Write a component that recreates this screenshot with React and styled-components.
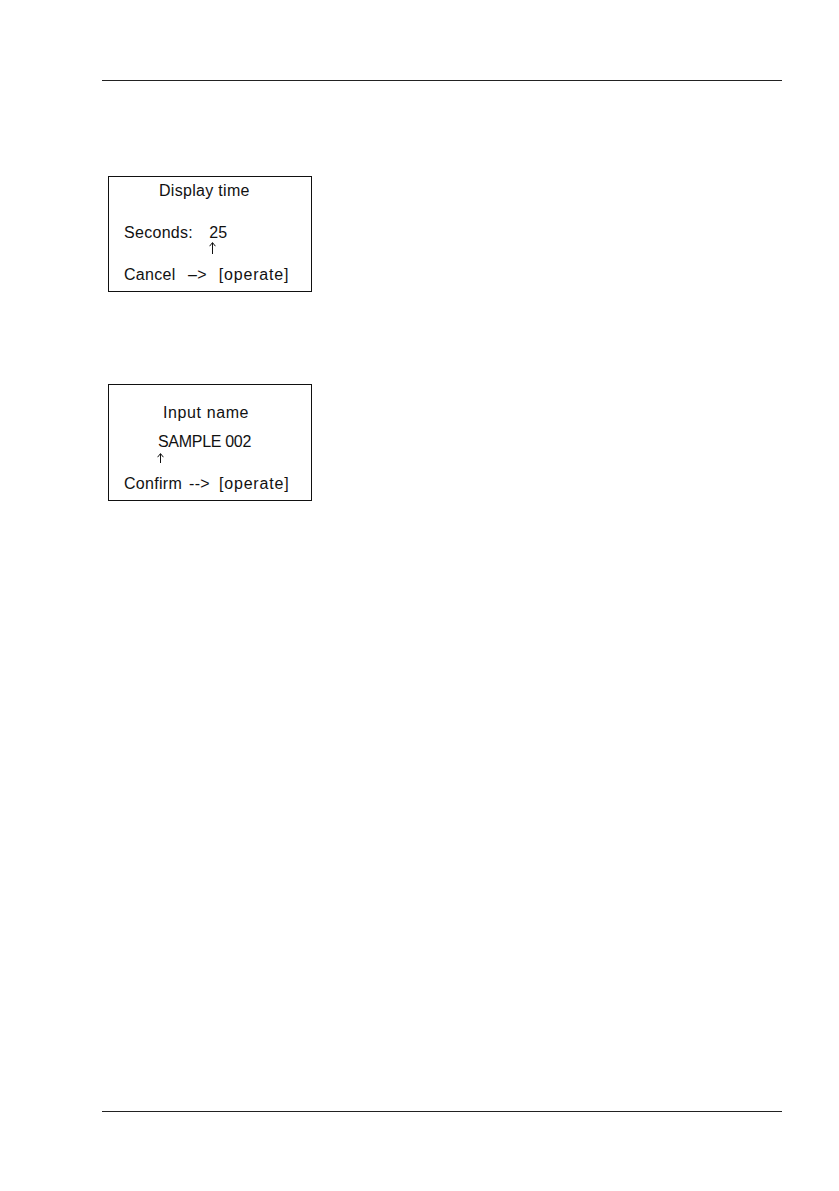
import React from "react";
import styled, { createGlobalStyle } from "styled-components";

const GlobalStyle = createGlobalStyle`
  html, body {
    margin: 0;
    padding: 0;
    background: #ffffff;
  }
  body {
    font-family: "Liberation Sans", Arial, sans-serif;
    color: #111111;
  }
`;

const Page = styled.div`
  width: 839px;
  height: 1191px;
  box-sizing: border-box;
  padding: 80px 0 0 102px;
  display: flex;
  flex-direction: column;
`;

const Rule = styled.div`
  width: 680px;
  height: 1px;
  background: #222222;
  margin-top: ${(p) => p.$top || 0}px;
`;

const Screen = styled.div`
  width: 204px;
  height: ${(p) => p.$height}px;
  box-sizing: border-box;
  margin: ${(p) => p.$top}px 0 0 6px;
  border: 1px solid #111111;
  padding-top: ${(p) => p.$pad}px;
  display: flex;
  flex-direction: column;
`;

const Row = styled.div`
  display: flex;
  font-size: 16px;
  line-height: 18px;
  height: 18px;
  white-space: pre;
  margin-top: ${(p) => p.$gap || 0}px;
`;

const Word = styled.span`
  margin-left: ${(p) => p.$ml}px;
  letter-spacing: ${(p) => (p.$ls === undefined ? 0.3 : p.$ls)}px;
`;

const CursorRow = styled.div`
  display: flex;
  height: ${(p) => p.$h}px;
  margin-top: ${(p) => p.$gap || 0}px;
  padding-left: ${(p) => p.$indent}px;
`;

function Cursor({ indent, gap, h }) {
  return (
    <CursorRow $indent={indent} $gap={gap} $h={h}>
      <svg width="7" height={h} viewBox={`0 0 7 ${h}`}>
        <path
          d={`M3.5 0.8 V${h} M0.6 4.2 L3.5 0.6 L6.4 4.2`}
          fill="none"
          stroke="#111"
          strokeWidth="1"
        />
      </svg>
    </CursorRow>
  );
}

function DisplayTimeScreen() {
  return (
    <Screen $top={95} $height={116} $pad={4.5}>
      <Row>
        <Word $ml={50}>Display time</Word>
      </Row>
      <Row $gap={24}>
        <Word $ml={15}>Seconds:</Word>
        <Word $ml={16}>25</Word>
      </Row>
      <Cursor indent={100} gap={0.5} h={12} />
      <Row $gap={12}>
        <Word $ml={15}>Cancel</Word>
        <Word $ml={12.4}>–&gt;</Word>
        <Word $ml={12} $ls={0.8}>
          [operate]
        </Word>
      </Row>
    </Screen>
  );
}

function InputNameScreen() {
  return (
    <Screen $top={92} $height={117} $pad={18.5}>
      <Row>
        <Word $ml={54} $ls={0.6}>
          Input name
        </Word>
      </Row>
      <Row $gap={11}>
        <Word $ml={49} $ls={-0.3}>
          SAMPLE 002
        </Word>
      </Row>
      <Cursor indent={48} gap={2.5} h={10} />
      <Row $gap={11.5}>
        <Word $ml={15}>Confirm</Word>
        <Word $ml={7}>--&gt;</Word>
        <Word $ml={9} $ls={0.8}>
          [operate]
        </Word>
      </Row>
    </Screen>
  );
}

export default function App() {
  return (
    <>
      <GlobalStyle />
      <Page>
        <Rule />
        <DisplayTimeScreen />
        <InputNameScreen />
        <Rule $top={610} />
      </Page>
    </>
  );
}
